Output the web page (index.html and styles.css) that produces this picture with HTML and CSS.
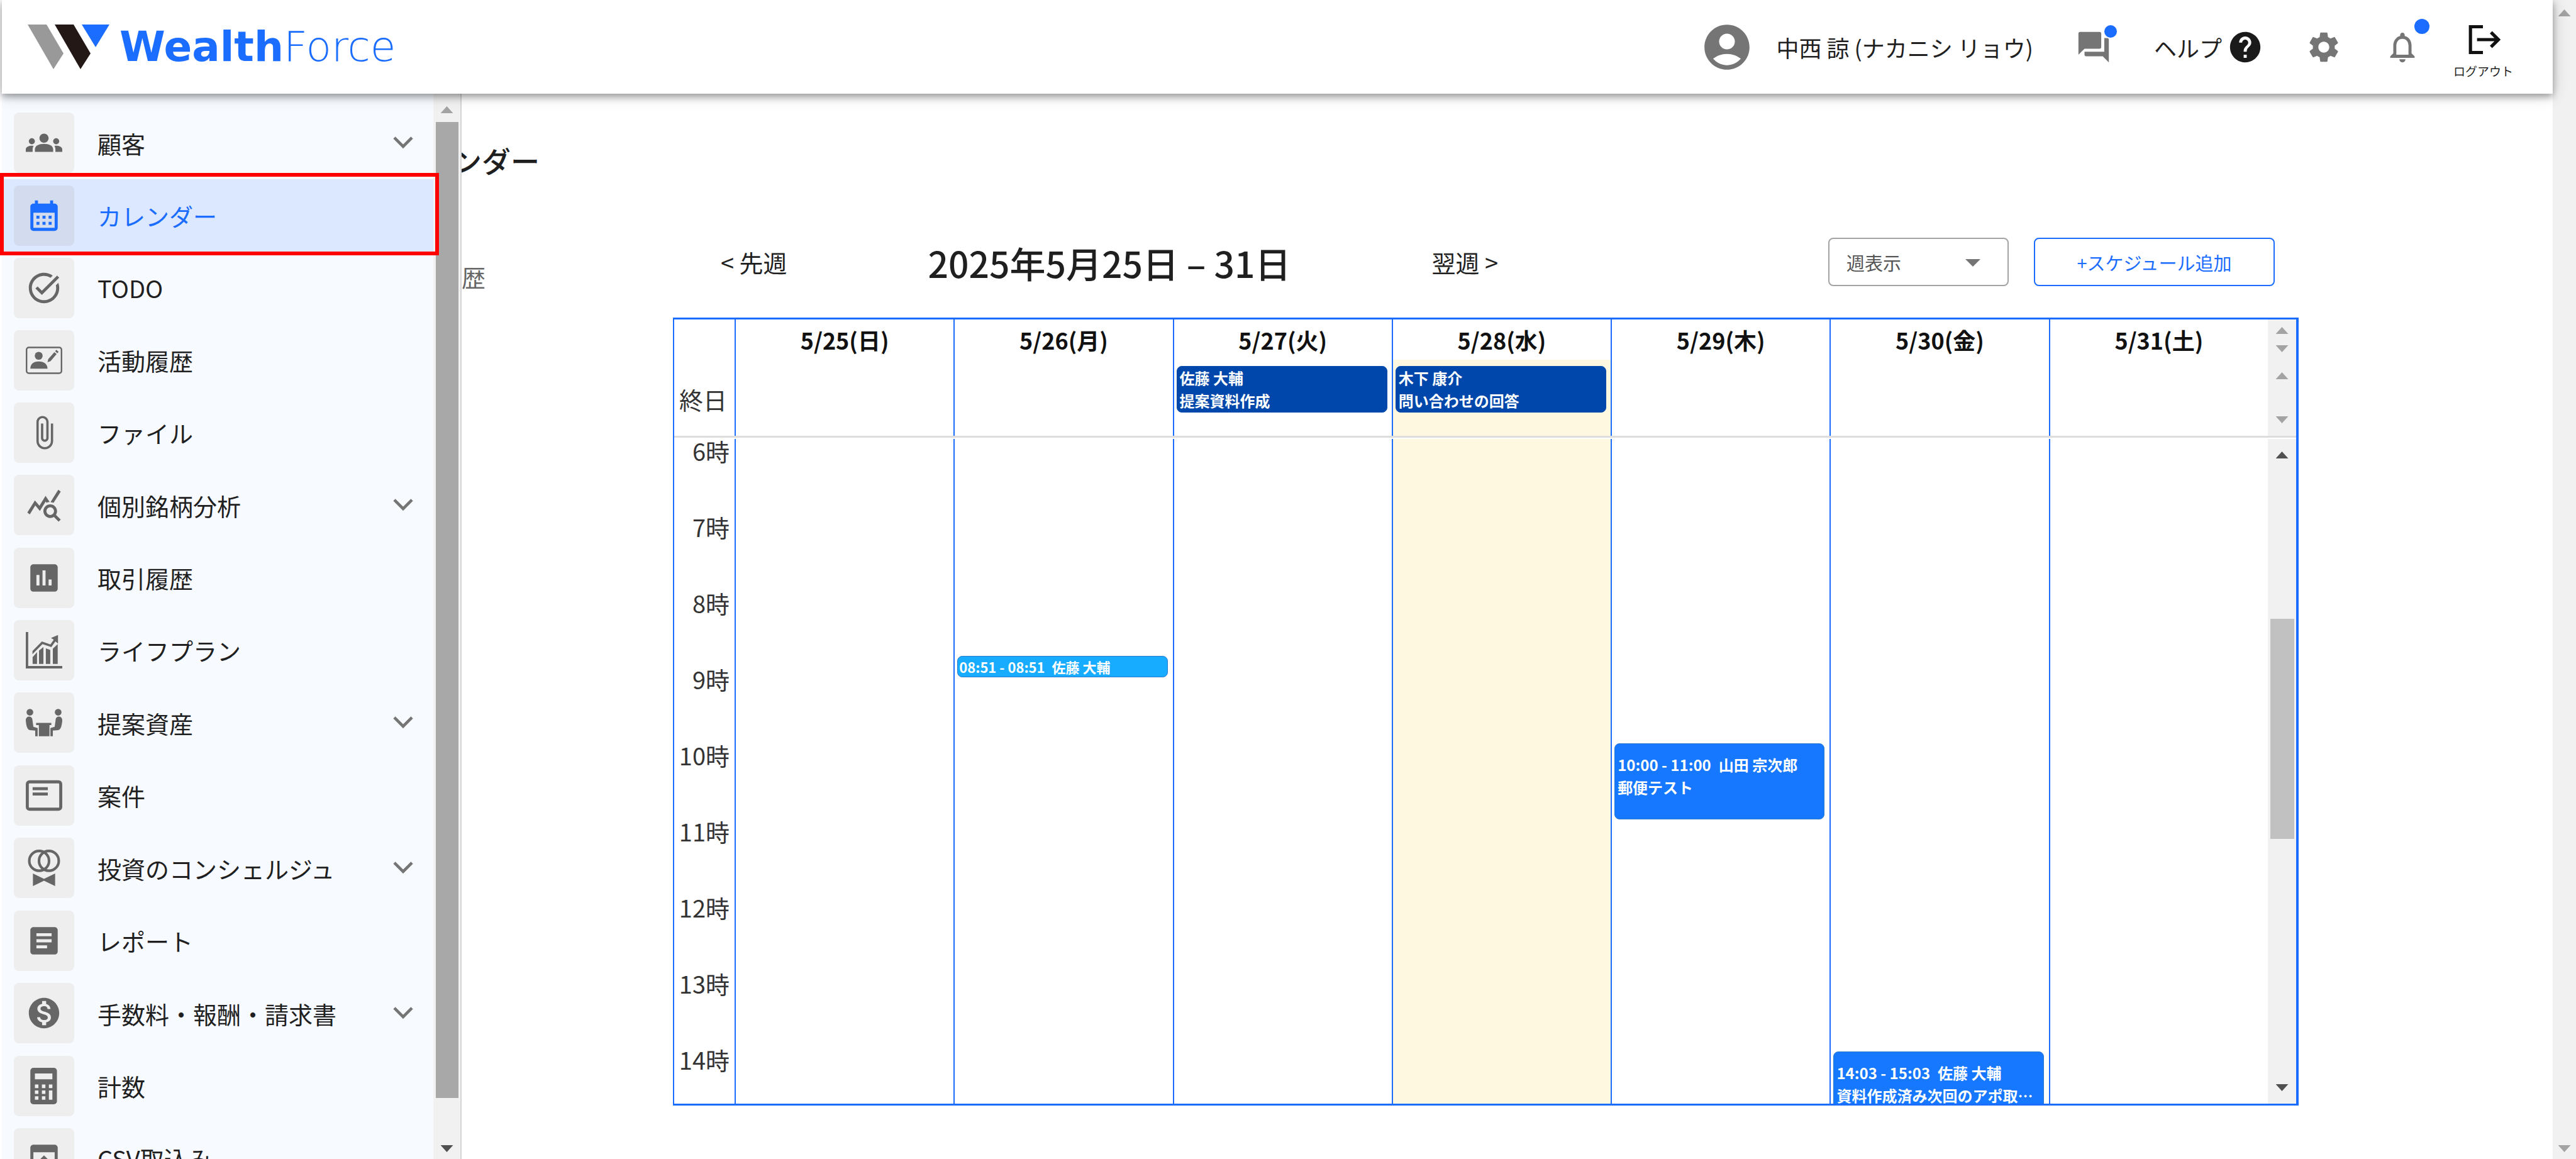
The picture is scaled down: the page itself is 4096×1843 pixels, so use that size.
FILE: index.html
```html
<!DOCTYPE html>
<html lang="ja">
<head>
    <meta charset="UTF-8">
    <meta name="viewport" content="width=device-width, initial-scale=1.0">
    <title>WealthForce</title>
    <link rel="stylesheet" href="styles.css">
</head>
<body>
    <div class="page">
        <header class="header">
            <a href="#" class="logo">
                <svg class="logo-mark" viewBox="0 0 130 72">
                    <path d="M0 0h30l27 46-16 25z" fill="#999"/>
                    <path d="M43 0h30l27 46-16 25z" fill="#231815"/>
                    <path d="M86 0h44l-22 36z" fill="#1a6dff"/>
                </svg>
                <span class="logo-text"><b>Wealth</b>Force</span>
            </a>
            <div class="header-menu">
                <div class="user">
                    <svg class="avatar" viewBox="0 0 24 24"><path d="M12 2C6.48 2 2 6.48 2 12s4.48 10 10 10 10-4.48 10-10S17.52 2 12 2zm0 4c1.93 0 3.5 1.57 3.5 3.5S13.93 13 12 13s-3.500-1.570-3.500-3.500S10.070 6 12 6zm0 14c-2.030 0-4.430-.820-6.140-2.880C7.550 15.800 9.680 15 12 15s4.450.800 6.140 2.120C16.430 19.180 14.030 20 12 20z"/></svg>
                    <span>中西 諒 (ナカニシ リョウ)</span>
                </div>
                <button class="icon-button" aria-label="メッセージ">
                    <svg class="icon" viewBox="0 0 24 24"><path d="M21 6h-2v9H6v2c0 .55.45 1 1 1h11l4 4V7c0-.55-.45-1-1-1zm-4 6V3c0-.55-.45-1-1-1H3c-.55 0-1 .45-1 1v14l4-4h10c.55 0 1-.45 1-1z"/></svg>
                    <span class="badge"></span>
                </button>
                <a href="#" class="help">ヘルプ
                    <svg class="icon" viewBox="0 0 24 24"><path d="M12 2C6.48 2 2 6.48 2 12s4.48 10 10 10 10-4.48 10-10S17.52 2 12 2zm1 17h-2v-2h2v2zm2.07-7.75l-.9.92C13.45 12.9 13 13.5 13 15h-2v-.5c0-1.1.45-2.1 1.17-2.83l1.24-1.26c.37-.36.59-.86.59-1.41 0-1.1-.9-2-2-2s-2 .9-2 2H8c0-2.21 1.79-4 4-4s4 1.79 4 4c0 .88-.36 1.68-.93 2.25z"/></svg>
                </a>
                <button class="icon-button" aria-label="設定">
                    <svg class="icon" viewBox="0 0 24 24"><path d="M19.14 12.94c.04-.3.06-.61.06-.94 0-.32-.02-.64-.07-.94l2.03-1.58c.18-.14.23-.41.12-.61l-1.92-3.32c-.12-.22-.37-.29-.59-.22l-2.39.96c-.5-.38-1.03-.7-1.62-.94l-.36-2.54c-.04-.24-.24-.41-.48-.41h-3.84c-.24 0-.43.17-.47.41l-.36 2.54c-.59.24-1.13.57-1.62.94l-2.39-.96c-.22-.08-.47 0-.59.22L2.74 8.87c-.12.21-.08.47.12.61l2.03 1.58c-.05.3-.09.63-.09.94s.02.64.07.94l-2.03 1.58c-.18.14-.23.41-.12.61l1.92 3.32c.12.22.37.29.59.22l2.39-.96c.5.38 1.03.7 1.62.94l.36 2.54c.05.24.24.41.48.41h3.84c.24 0 .44-.17.47-.41l.36-2.54c.59-.24 1.13-.56 1.62-.94l2.39.96c.22.08.47 0 .59-.22l1.92-3.32c.12-.22.07-.47-.12-.61l-2.01-1.58zM12 15.6c-1.98 0-3.6-1.62-3.6-3.6s1.62-3.6 3.6-3.6 3.6 1.620 3.6 3.6-1.620 3.6-3.6 3.6z"/></svg>
                </button>
                <button class="icon-button bell" aria-label="通知">
                    <svg class="icon" viewBox="0 0 24 24"><path d="M12 22c1.1 0 2-.9 2-2h-4c0 1.1.9 2 2 2zm6-6v-5c0-3.07-1.63-5.64-4.5-6.32V4c0-.83-.67-1.5-1.5-1.5s-1.5.67-1.5 1.5v.68C7.64 5.36 6 7.92 6 11v5l-2 2v1h16v-1l-2-2zm-2 1H8v-6c0-2.48 1.51-4.5 4-4.5s4 2.02 4 4.500v6z"/></svg>
                    <span class="badge badge-large"></span>
                </button>
                <button class="logout">
                    <svg class="logout-icon" viewBox="0 0 24 24" fill="none" stroke="#111" stroke-width="2.200"><path d="M12 3.200H3.500v17.600H12M8 12h14M17.500 7l5 5-5 5"/></svg>
                    ログアウト
                </button>
            </div>
        </header>

        <aside class="sidebar">
            <nav class="nav">
                <a href="#" class="nav-item expandable">
                    <span class="nav-icon"><svg class="icon" viewBox="0 0 24 24"><path d="M4 13c1.1 0 2-.9 2-2s-.9-2-2-2-2 .9-2 2 .9 2 2 2zm1.130 1.100C4.760 14.040 4.390 14 4 14c-.990 0-1.930.210-2.780.580C.480 14.900 0 15.620 0 16.430V18h4.500v-1.610c0-.830.230-1.610.630-2.290zM20 13c1.100 0 2-.9 2-2s-.9-2-2-2-2 .9-2 2 .9 2 2 2zm4 3.430c0-.81-.48-1.530-1.220-1.850-.85-.37-1.790-.58-2.780-.58-.39 0-.76.040-1.130.1.400.680.630 1.460.630 2.290V18H24v-1.570zm-7.760-2.780c-1.170-.52-2.610-.9-4.240-.9s-3.070.39-4.240.9C6.680 14.130 6 15.210 6 16.390V18h12v-1.610c0-1.180-.68-2.260-1.760-2.740zM9 9c0 1.660 1.340 3 3 3s3-1.340 3-3-1.340-3-3-3-3 1.340-3 3z"/></svg></span>
                    <span class="nav-label">顧客</span>
                    <svg class="chevron" viewBox="0 0 24 24"><path d="M6 8.500l6 6 6-6"/></svg>
                </a>
                <a href="#" class="nav-item active">
                    <span class="nav-icon"><svg class="icon" viewBox="0 0 24 24"><path d="M19 4h-1V2h-2v2H8V2H6v2H5c-1.110 0-1.990.9-1.990 2L3 20c0 1.100.890 2 2 2h14c1.100 0 2-.9 2-2V6c0-1.100-.9-2-2-2zm0 16H5V10h14v10zM9 14H7v-2h2v2zm4 0h-2v-2h2v2zm4 0h-2v-2h2v2zm-8 4H7v-2h2v2zm4 0h-2v-2h2v2zm4 0h-2v-2h2v2z"/></svg></span>
                    <span class="nav-label">カレンダー</span>
                    <span class="highlight"></span>
                </a>
                <a href="#" class="nav-item">
                    <span class="nav-icon"><svg class="icon" viewBox="0 0 24 24"><path d="M22 5.180 10.590 16.600l-4.240-4.240 1.410-1.410 2.830 2.830 10-10L22 5.180zm-2.210 5.040c.13.570.21 1.170.21 1.780 0 4.420-3.580 8-8 8s-8-3.580-8-8 3.580-8 8-8c1.580 0 3.040.46 4.280 1.250l1.440-1.440C16.100 2.670 14.130 2 12 2 6.480 2 2 6.480 2 12s4.480 10 10 10 10-4.480 10-10c0-1.190-.22-2.330-.6-3.390l-1.610 1.610z"/></svg></span>
                    <span class="nav-label">TODO</span>
                </a>
                <a href="#" class="nav-item">
                    <span class="nav-icon"><svg class="icon" viewBox="0 0 24 24"><rect x=".5" y="3.500" width="23" height="17" rx="1.500" fill="none" stroke="#666"/><circle cx="8.500" cy="9" r="2.600"/><path d="M3 17.500c0-3 2-4.800 5.500-4.800s5.800 1.800 5.800 4.800zM14.300 13.200l.5-2 4-4.600 1.500 1.300-4 4.600zM19.300 6l.8-.9 1.500 1.300-.8.9z"/></svg></span>
                    <span class="nav-label">活動履歴</span>
                </a>
                <a href="#" class="nav-item">
                    <span class="nav-icon"><svg class="icon" viewBox="0 0 24 24"><path d="M16.500 6v11.500c0 2.210-1.790 4-4 4s-4-1.790-4-4V5c0-1.380 1.120-2.500 2.500-2.500s2.500 1.120 2.500 2.500v10.500c0 .55-.45 1-1 1s-1-.45-1-1V6H10v9.500c0 1.380 1.120 2.500 2.500 2.500s2.500-1.120 2.500-2.500V5c0-2.210-1.790-4-4-4S7 2.790 7 5v12.500c0 3.040 2.460 5.500 5.500 5.500s5.500-2.460 5.500-5.500V6h-1.500z"/></svg></span>
                    <span class="nav-label">ファイル</span>
                </a>
                <a href="#" class="nav-item expandable">
                    <span class="nav-icon"><svg class="icon" viewBox="0 0 24 24"><path d="M19.880 18.470c.44-.7.7-1.510.7-2.390 0-2.490-2.010-4.500-4.500-4.500s-4.500 2.010-4.500 4.500 2.010 4.500 4.490 4.500c.88 0 1.700-.26 2.390-.7L21.580 23 23 21.580l-3.120-3.110zm-3.800.11c-1.380 0-2.500-1.120-2.500-2.500s1.120-2.500 2.500-2.500 2.500 1.120 2.500 2.500-1.120 2.500-2.500 2.500zm-.36-8.500c-.74.02-1.450.18-2.100.45l-.55-.83-3.800 6.180-3.010-3.520-3.630 5.810L1 17l5-8 3 3.500L13 6l2.720 4.080zm2.590.5c-.64-.28-1.330-.45-2.050-.49L21.380 2 23 3.180l-4.690 7.400z"/></svg></span>
                    <span class="nav-label">個別銘柄分析</span>
                    <svg class="chevron" viewBox="0 0 24 24"><path d="M6 8.500l6 6 6-6"/></svg>
                </a>
                <a href="#" class="nav-item">
                    <span class="nav-icon"><svg class="icon" viewBox="0 0 24 24"><path d="M19 3H5c-1.100 0-2 .9-2 2v14c0 1.100.9 2 2 2h14c1.100 0 2-.9 2-2V5c0-1.100-.9-2-2-2zM9 17H7v-7h2v7zm4 0h-2V7h2v10zm4 0h-2v-4h2v4z"/></svg></span>
                    <span class="nav-label">取引履歴</span>
                </a>
                <a href="#" class="nav-item">
                    <span class="nav-icon"><svg class="icon" viewBox="0 0 24 24"><path d="M0 0h1.600v22.300H24V24H0zM4.500 16.500l2.900-3.300V21H4.500zM8.700 12.200l2.900-2.300V21H8.700zM13.200 10.800l2.900 1V21h-2.900zM17.800 11l3.200-3v13h-3.200zM4.400 12.500l6.200-6.300 5.600 2 2.200-3.100-1.800-1.200L21.200 2v5.600l-1.700-1.400-2.700 3.700-5.800-1.900-6.600 6.600z"/></svg></span>
                    <span class="nav-label">ライフプラン</span>
                </a>
                <a href="#" class="nav-item expandable">
                    <span class="nav-icon"><svg class="icon" viewBox="0 0 24 24"><circle cx="2.700" cy="5.200" r="2.200"/><circle cx="21.300" cy="5.200" r="2.200"/><path d="M0 10.500c0-3.200 4.400-3.200 4.400 0L5 14.800l2.800.8V21H6.200v-3.700L2.500 17C.8 16.300.2 13.500 0 10.500zM24 10.500c0-3.200-4.400-3.200-4.400 0l-.6 4.300-2.800.8V21h1.600v-3.700l3.700-.3c1.700-.7 2.300-3.500 2.500-6.500zM6.800 12.200h10v1.500h-1.200V21H8.600v-7.300H6.800z"/></svg></span>
                    <span class="nav-label">提案資産</span>
                    <svg class="chevron" viewBox="0 0 24 24"><path d="M6 8.500l6 6 6-6"/></svg>
                </a>
                <a href="#" class="nav-item">
                    <span class="nav-icon"><svg class="icon" viewBox="0 0 24 24"><rect x="1" y="3" width="22" height="18" rx="1.500" fill="none" stroke="#666" stroke-width="2"/><path d="M4.500 6.500h10v2h-10zM4.500 10h10v2h-10z"/></svg></span>
                    <span class="nav-label">案件</span>
                </a>
                <a href="#" class="nav-item expandable">
                    <span class="nav-icon"><svg class="icon" viewBox="0 0 24 24"><g fill="none" stroke="#666" stroke-width="1.700"><circle cx="8.800" cy="7.400" r="6.500"/><circle cx="15.200" cy="7.400" r="6.500"/></g><path d="M4.700 15.700L12 19.200l7.300-3.500V24L12 20.500 4.700 24z"/></svg></span>
                    <span class="nav-label">投資のコンシェルジュ</span>
                    <svg class="chevron" viewBox="0 0 24 24"><path d="M6 8.500l6 6 6-6"/></svg>
                </a>
                <a href="#" class="nav-item">
                    <span class="nav-icon"><svg class="icon" viewBox="0 0 24 24"><path d="M19 3H5c-1.100 0-2 .9-2 2v14c0 1.100.9 2 2 2h14c1.100 0 2-.9 2-2V5c0-1.100-.9-2-2-2zm-5 14H7v-2h7v2zm3-4H7v-2h10v2zm0-4H7V7h10v2z"/></svg></span>
                    <span class="nav-label">レポート</span>
                </a>
                <a href="#" class="nav-item expandable">
                    <span class="nav-icon"><svg class="icon" viewBox="0 0 24 24"><path d="M12 2C6.480 2 2 6.480 2 12s4.480 10 10 10 10-4.480 10-10S17.520 2 12 2zm1.410 16.090V20h-2.670v-1.930c-1.710-.36-3.160-1.460-3.270-3.400h1.960c.1 1.050.82 1.870 2.650 1.870 1.960 0 2.400-.98 2.400-1.590 0-.83-.44-1.610-2.670-2.140-2.480-.6-4.180-1.620-4.180-3.670 0-1.720 1.390-2.840 3.110-3.210V4h2.670v1.950c1.860.45 2.790 1.860 2.850 3.390H14.300c-.05-1.110-.64-1.870-2.220-1.870-1.500 0-2.400.68-2.400 1.640 0 .84.65 1.390 2.670 1.910s4.180 1.390 4.180 3.910c-.01 1.830-1.380 2.830-3.120 3.160z"/></svg></span>
                    <span class="nav-label">手数料・報酬・請求書</span>
                    <svg class="chevron" viewBox="0 0 24 24"><path d="M6 8.500l6 6 6-6"/></svg>
                </a>
                <a href="#" class="nav-item">
                    <span class="nav-icon"><svg class="icon" viewBox="0 0 24 24"><rect x="3" width="17.500" height="24" rx="2"/><path fill="#eee" d="M6 3.700h11.500v3.800H6zM6 11h2.300v2.300H6zM10.600 11h2.300v2.300h-2.300zM15.200 11h2.300v2.300h-2.300zM6 14.900h2.300v2.300H6zM10.600 14.900h2.300v2.300h-2.300zM6 18.700h2.300V21H6zM10.600 18.700h2.300V21h-2.300zM15.200 14.900h2.300V21h-2.300z"/></svg></span>
                    <span class="nav-label">計数</span>
                </a>
                <a href="#" class="nav-item">
                    <span class="nav-icon"><svg class="icon" viewBox="0 0 24 24"><path d="M5 3h14c1.100 0 2 .9 2 2v14c0 1.100-.9 2-2 2h-4v-2h4V8H5v11h4v2H5c-1.100 0-2-.9-2-2V5c0-1.100.9-2 2-2zM12 10l4 4h-3v7h-2v-7H8z"/></svg></span>
                    <span class="nav-label">CSV取込み</span>
                </a>
            </nav>
            <div class="scrollbar sidebar-scroll">
                <span class="arrow-up muted"></span>
                <span class="thumb"></span>
                <span class="arrow-down"></span>
            </div>
        </aside>

        <main class="content">
            <h1 class="page-title">カレンダー</h1>
            <div class="columns">
                <a href="#" class="tab">履歴</a>
                <section class="schedule">
                    <div class="toolbar">
                        <button class="week-button">&lt; 先週</button>
                        <h2 class="period">2025年5月25日 – 31日</h2>
                        <button class="week-button">翌週 &gt;</button>
                        <div class="view-select">
                            <select aria-label="表示切替">
                                <option>週表示</option>
                            </select>
                            <svg class="select-arrow" viewBox="0 0 24 12"><path d="M0 0h24L12 12z"/></svg>
                        </div>
                        <button class="add-button">+スケジュール追加</button>
                    </div>

                    <div class="calendar">
                        <div class="calendar-head">
                            <table>
                                <thead>
                                    <tr>
                                        <th class="axis"></th>
                                        <th>5/25(日)</th>
                                        <th>5/26(月)</th>
                                        <th>5/27(火)</th>
                                        <th>5/28(水)</th>
                                        <th>5/29(木)</th>
                                        <th>5/30(金)</th>
                                        <th>5/31(土)</th>
                                    </tr>
                                </thead>
                                <tbody>
                                    <tr class="all-day">
                                        <td class="axis">終日</td>
                                        <td></td>
                                        <td></td>
                                        <td><div class="event event-all-day">佐藤 大輔<br>提案資料作成</div></td>
                                        <td class="today"><div class="event event-all-day">木下 康介<br>問い合わせの回答</div></td>
                                        <td></td>
                                        <td></td>
                                        <td></td>
                                    </tr>
                                </tbody>
                            </table>
                            <div class="head-scroll">
                                <div class="scrollbar head-scroll-dates">
                                    <span class="arrow-up muted"></span>
                                    <span class="arrow-down muted"></span>
                                </div>
                                <div class="scrollbar">
                                    <span class="arrow-up muted"></span>
                                    <span class="arrow-down muted"></span>
                                </div>
                            </div>
                        </div>
                        <div class="calendar-body">
                            <div class="time-view">
                                <table class="time-grid">
                                    <tr><td class="axis">6時</td><td></td><td></td><td></td><td class="today"></td><td></td><td></td><td></td></tr>
                                    <tr><td class="axis">7時</td><td></td><td></td><td></td><td class="today"></td><td></td><td></td><td></td></tr>
                                    <tr>
                                        <td class="axis">8時</td><td></td>
                                        <td><div class="event event-timed event-short" style="top: 85%">08:51 - 08:51&ensp;佐藤 大輔</div></td>
                                        <td></td><td class="today"></td><td></td><td></td><td></td>
                                    </tr>
                                    <tr><td class="axis">9時</td><td></td><td></td><td></td><td class="today"></td><td></td><td></td><td></td></tr>
                                    <tr>
                                        <td class="axis">10時</td><td></td><td></td><td></td><td class="today"></td>
                                        <td><div class="event event-timed" style="top: 0%">10:00 - 11:00&ensp;山田 宗次郎<br>郵便テスト</div></td>
                                        <td></td><td></td>
                                    </tr>
                                    <tr><td class="axis">11時</td><td></td><td></td><td></td><td class="today"></td><td></td><td></td><td></td></tr>
                                    <tr><td class="axis">12時</td><td></td><td></td><td></td><td class="today"></td><td></td><td></td><td></td></tr>
                                    <tr><td class="axis">13時</td><td></td><td></td><td></td><td class="today"></td><td></td><td></td><td></td></tr>
                                    <tr>
                                        <td class="axis">14時</td><td></td><td></td><td></td><td class="today"></td><td></td>
                                        <td><div class="event event-timed" style="top: 5%">14:03 - 15:03&ensp;佐藤 大輔<br>資料作成済み次回のアポ取…</div></td>
                                        <td></td>
                                    </tr>
                                </table>
                            </div>
                            <div class="scrollbar body-scroll">
                                <span class="arrow-up"></span>
                                <span class="thumb"></span>
                                <span class="arrow-down"></span>
                            </div>
                        </div>
                    </div>
                </section>
            </div>
        </main>
    </div>
    <div class="scrollbar page-scroll">
        <span class="arrow-up muted"></span>
        <span class="arrow-down muted"></span>
    </div>
</body>
</html>
```
FILE: styles.css
```css
* {
    padding: 0;
    margin: 0;
    box-sizing: border-box;
}

:root {
    --blue: #1a6dff;
    --text: #1f1f1f;
    --gray: #757575;
    --icon: #666666;
    --track: #f1f1f1;
    --today: #fff8e1;
}

body {
    display: flex;
    height: 100vh;
    overflow: hidden;
    background-color: #fff;
    color: var(--text);
    font-family: "Noto Sans CJK JP", sans-serif;
    font-size: 38px;
}

a {
    color: inherit;
    text-decoration: none;
}

button {
    border: none;
    background: none;
    color: inherit;
    font: inherit;
    cursor: pointer;
}

.page {
    position: relative;
    display: flex;
    flex-direction: column;
    flex: 1;
    min-width: 0;
    padding-left: 3px;
}

/* header */
.header {
    position: relative;
    z-index: 3;
    display: flex;
    flex: none;
    align-items: center;
    justify-content: space-between;
    height: 149px;
    padding: 0 63px 0 41px;
    background-color: #fff;
    box-shadow: 0 5px 10px rgba(0, 0, 0, 0.3), 0 2px 24px rgba(0, 0, 0, 0.2);
}

.logo {
    display: flex;
    align-items: center;
    gap: 16px;
    color: var(--blue);
}

.logo-mark {
    width: 130px;
    height: 72px;
}

.logo-text {
    font-family: "DejaVu Sans", sans-serif;
    font-size: 66px;
    font-weight: 200;
    line-height: 72px;
}

.logo-text b {
    font-weight: 700;
}

.header-menu {
    display: flex;
    align-items: center;
    gap: 67px;
    font-size: 36px;
}

.user {
    display: flex;
    align-items: center;
    gap: 35px;
}

.avatar {
    width: 86px;
    height: 86px;
    fill: var(--gray);
}

.icon {
    display: block;
    width: 58px;
    height: 58px;
    fill: var(--icon);
}

.icon-button {
    position: relative;
}

.icon-button .icon {
    fill: var(--gray);
}

.badge {
    position: absolute;
    top: -6px;
    right: -8px;
    width: 20px;
    height: 20px;
    border-radius: 50%;
    background-color: var(--blue);
}

.badge-large {
    top: -16px;
    right: -14px;
    width: 24px;
    height: 24px;
}

.help {
    display: flex;
    align-items: center;
    gap: 8px;
}

.help .icon {
    fill: #1a1a1a;
}

.logout {
    display: flex;
    flex-direction: column;
    align-items: center;
    gap: 8px;
    margin-left: -15px;
    padding-top: 12px;
    font-size: 19px;
    line-height: 28px;
}

.logout-icon {
    width: 56px;
    height: 56px;
}

/* sidebar lies over the content */
.sidebar {
    position: absolute;
    z-index: 2;
    top: 149px;
    bottom: 0;
    left: 3px;
    display: flex;
    width: 731px;
    border-right: 2px solid #d5d5d5;
    background-color: #f7faff;
}

.nav {
    flex: 1;
    padding-top: 20px;
}

.nav-item {
    position: relative;
    display: flex;
    align-items: center;
    height: 115px;
    padding: 0 20px 0 19px;
}

.expandable {
    height: 116px;
}

.nav-icon {
    display: flex;
    align-items: center;
    justify-content: center;
    width: 96px;
    height: 96px;
    margin-right: 37px;
    border-radius: 8px;
    background-color: #eee;
}

.nav-label {
    flex: 1;
}

.active {
    background-color: #dce8ff;
    color: var(--blue);
}

.active .nav-icon {
    background-color: #d3dcef;
}

.active .icon {
    fill: var(--blue);
}

.highlight {
    position: absolute;
    z-index: 1;
    top: -10px;
    right: -9px;
    bottom: -6px;
    left: -3px;
    border: 6px solid #f00;
}

.chevron {
    width: 56px;
    height: 56px;
    fill: none;
    stroke: var(--gray);
    stroke-width: 2;
}

/* scrollbars */
.scrollbar {
    display: flex;
    flex-direction: column;
    align-items: center;
    justify-content: space-between;
    padding: 20px 0;
    background-color: var(--track);
}

.arrow-up,
.arrow-down {
    width: 20px;
    height: 11px;
    background-color: #505050;
}

.arrow-up {
    clip-path: polygon(50% 0, 100% 100%, 0 100%);
}

.arrow-down {
    clip-path: polygon(0 0, 100% 0, 50% 100%);
}

.muted {
    background-color: #a3a3a3;
}

.page-scroll {
    flex: none;
    width: 37px;
    padding: 15px 0 11px;
}

.sidebar-scroll {
    width: 43px;
    padding: 20px 0 11px;
}

.sidebar-scroll .thumb {
    flex: 1;
    width: 36px;
    margin: 14px 0 75px;
    background-color: #a8a8a8;
}

.body-scroll .thumb {
    width: 38px;
    height: 350px;
    margin-bottom: 136px;
    background-color: #c1c1c1;
}

/* content */
.content {
    display: flex;
    flex-direction: column;
    flex: 1;
    min-height: 0;
    padding: 71px 404px 85px 625px;
}

.page-title {
    margin-bottom: 90px;
    font-size: 46px;
    font-weight: 500;
    line-height: 68px;
}

.columns {
    display: grid;
    flex: 1;
    grid-template-columns: 442px 1fr;
    min-height: 0;
}

.tab {
    padding: 34px 0 0 68px;
    color: var(--icon);
}

.schedule {
    display: flex;
    flex-direction: column;
    min-height: 0;
}

.toolbar {
    display: flex;
    align-items: center;
    height: 77px;
    margin-bottom: 50px;
    padding: 0 38px 0 76px;
}

.period {
    margin: 0 224px;
    font-size: 57px;
    font-weight: 500;
}

.view-select {
    position: relative;
    width: 287px;
    height: 77px;
    margin: 0 40px 0 auto;
}

.view-select select {
    width: 100%;
    height: 100%;
    padding-left: 27px;
    border: 2px solid #a3a3a3;
    border-radius: 8px;
    background-color: #fff;
    color: #555;
    font: inherit;
    font-size: 29px;
    appearance: none;
}

.select-arrow {
    position: absolute;
    top: 34px;
    right: 45px;
    width: 24px;
    height: 12px;
    fill: var(--gray);
}

.add-button {
    width: 383px;
    height: 77px;
    border: 2px solid var(--blue);
    border-radius: 8px;
    color: var(--blue);
    font-size: 29px;
}

/* calendar */
.calendar {
    display: flex;
    flex-direction: column;
    flex: 1;
    min-height: 0;
    border: 3px solid var(--blue);
    border-right-width: 4px;
    border-left-width: 2px;
}

.calendar-head {
    display: flex;
    margin-bottom: 2px;
    border-bottom: 3px solid #ddd;
}

.calendar-body {
    display: flex;
    flex: 1;
    min-height: 0;
}

table {
    flex: 1;
    width: 100%;
    border-spacing: 0;
    table-layout: fixed;
}

th {
    height: 64px;
    border-left: 2px solid var(--blue);
    font-size: 36px;
    font-weight: 700;
    line-height: 64px;
    color: #111;
}

td {
    position: relative;
    height: 121px;
    border-left: 2px solid var(--blue);
    vertical-align: top;
}

.axis {
    width: 96px;
    border-left: none;
    padding-right: 8px;
    color: #333;
    text-align: right;
    line-height: 38px;
}

.all-day td {
    padding: 10px 7px 0 4px;
}

.all-day .axis {
    padding: 42px 12px 0 0;
    line-height: 42px;
}

.today {
    background-color: var(--today);
}

.head-scroll {
    display: flex;
    flex-direction: column;
    width: 45px;
}

.head-scroll .scrollbar {
    flex: 1;
}

.head-scroll .head-scroll-dates {
    flex: none;
    height: 64px;
    padding: 12px 0;
}

.body-scroll {
    width: 45px;
}

.time-view {
    flex: 1;
    overflow: hidden;
}

.event {
    overflow: hidden;
    border: 1px solid #2a7ad0;
    border-radius: 8px;
    background-color: #1677ff;
    color: #fff;
    font-size: 24px;
    font-weight: 700;
    line-height: 36px;
    text-overflow: ellipsis;
    white-space: nowrap;
}

.event-all-day {
    padding: 0 4px;
    border-color: #0047ab;
    background-color: #0047ab;
}

.event-timed {
    position: absolute;
    right: 8px;
    left: 4px;
    height: 121px;
    padding: 15px 4px 0;
}

.event-short {
    height: 34px;
    padding: 0 2px;
    background-color: #17acff;
    font-size: 22px;
    line-height: 32px;
}
```
